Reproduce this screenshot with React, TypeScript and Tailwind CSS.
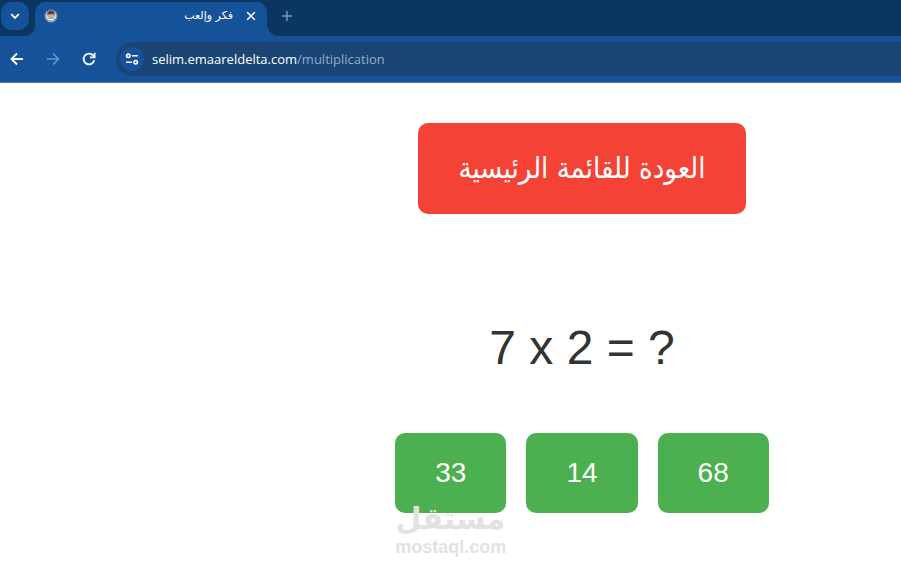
import { useState } from 'react';

function TabFavicon() {
  return (
    <svg viewBox="0 0 16 16" className="size-4 shrink-0" aria-hidden="true">
      <circle cx="8" cy="8" r="6.2" fill="none" stroke="#8e989c" strokeWidth="1.2" strokeDasharray="1.3 1" />
      <circle cx="8" cy="8" r="5.6" fill="#c3d3da" />
      <path d="M4.3 7.2C4 4.2 5.700 2.800 8 2.800s4 1.400 3.700 4.400z" fill="#4b4540" />
      <path d="M5 6.200h6v1.600c0 1.700-1.300 2.800-3 2.800s-3-1.100-3-2.800z" fill="#d9a684" />
      <path d="M3.800 12c.6-1.700 2-2.200 4.200-2.200s3.600.5 4.200 2.200C11 13.400 9.600 13.900 8 13.900S5 13.400 3.800 12z" fill="#7fb2da" />
      <path d="M5.300 11.600h5.400" stroke="#eef5f8" strokeWidth="1.200" />
    </svg>
  );
}

function TabStrip() {
  return (
    <div className="flex h-9 items-start bg-[#0b3661]">
      <div className="h-9 w-[35px] shrink-0 bg-[#15529a]">
        <div className="flex h-full rounded-br-[10px] bg-[#0b3661] pt-0.5 pl-px">
          <button type="button" aria-label="Search tabs" className="flex size-7 items-center justify-center rounded-[10px] bg-[#15529a]">
            <svg viewBox="0 0 10 10" className="size-2.5" fill="none" stroke="#fff" strokeWidth="1.800" aria-hidden="true">
              <path d="M1.200 3.200 5 7l3.800-3.800" />
            </svg>
          </button>
        </div>
      </div>
      <div className="flex h-9 w-[232px] shrink-0 bg-[#0b3661] pt-0.5">
        <div className="flex h-full w-full items-center rounded-t-[10px] bg-[#15529a] pr-2.5 pb-1.5 pl-2">
          <TabFavicon />
          <span dir="rtl" className="flex-1 pr-3 text-right font-['DejaVu_Sans',sans-serif] text-[11px] leading-4 text-white">
            فكر وإلعب
          </span>
          <button type="button" aria-label="Close tab" className="flex size-3 items-center justify-center">
            <svg viewBox="0 0 10 10" className="size-2.5" fill="none" stroke="#fff" strokeWidth="1.600" aria-hidden="true">
              <path d="m1.200 1.200 7.600 7.600M8.800 1.200 1.200 8.800" />
            </svg>
          </button>
        </div>
      </div>
      <div className="h-9 flex-1 bg-[#15529a]">
        <div className="flex h-full items-start rounded-bl-xl bg-[#0b3661] pt-2.5 pl-3.5">
          <button type="button" aria-label="New tab" className="flex size-3 items-center justify-center">
            <svg viewBox="0 0 12 12" className="size-3" fill="none" stroke="#7d98b5" strokeWidth="1.500" aria-hidden="true">
              <path d="M6 1v10M1 6h10" />
            </svg>
          </button>
        </div>
      </div>
    </div>
  );
}

function Toolbar() {
  return (
    <div className="flex h-[47px] items-center border-b border-[#4d7fb4] bg-[#15529a] pl-2.5">
      <button type="button" aria-label="Back" className="mr-[22px] size-3.5">
        <svg viewBox="0 0 14 14" className="size-3.5" fill="none" stroke="#fff" strokeWidth="1.800" aria-hidden="true">
          <path d="M13 7H1.800M7 1.500 1.500 7 7 12.500" />
        </svg>
      </button>
      <button type="button" aria-label="Forward" className="mr-[22px] size-3.5">
        <svg viewBox="0 0 14 14" className="size-3.5" fill="none" stroke="#6b94c6" strokeWidth="1.700" aria-hidden="true">
          <path d="M1 7h11.200M7 1.500 12.500 7 7 12.500" />
        </svg>
      </button>
      <button type="button" aria-label="Reload" className="mr-5 size-3.5">
        <svg viewBox="0 0 14 14" className="size-3.5" fill="none" stroke="#fff" strokeWidth="1.800" aria-hidden="true">
          <path d="M12.300 8.300A5.400 5.400 0 1 1 11.200 3.500l1.300 1.500" />
          <path d="M12.600.8v4.600H8" />
        </svg>
      </button>
      <div className="flex h-[34px] flex-1 items-center rounded-l-full bg-[#194474] pl-1">
        <button type="button" aria-label="View site information" className="mr-2 flex size-6 items-center justify-center rounded-full bg-[#15529a]">
          <svg viewBox="0 0 14 14" className="size-3.5" fill="none" stroke="#fff" strokeWidth="1.600" aria-hidden="true">
            <circle cx="3.300" cy="3.800" r="1.700" />
            <path d="M7 3.800h6M1 10.200h6" />
            <circle cx="10.700" cy="10.200" r="1.700" />
          </svg>
        </button>
        <span dir="ltr" className="font-['Open_Sans','Noto_Sans',sans-serif] text-[13px] leading-5 text-[#94accb]">
          <span className="text-white">selim.emaareldelta.com</span>/multiplication
        </span>
      </div>
    </div>
  );
}

function Watermark() {
  return (
    <div className="pointer-events-none absolute top-[68px] left-0 w-[110px] text-center font-bold text-[#e2e2e2]">
      <div dir="rtl" className="font-['DejaVu_Sans',sans-serif] text-[30px] leading-9">مستقل</div>
      <div className="font-['Liberation_Sans',Arial,sans-serif] text-[18px] leading-5">mostaql.com</div>
    </div>
  );
}

export default function App() {
  const [, setAnswer] = useState<number | null>(null);
  const answers = [33, 14, 68];

  return (
    <div className="min-h-screen overflow-hidden bg-white font-['Liberation_Sans',Arial,sans-serif]">
      <header>
        <TabStrip />
        <Toolbar />
      </header>
      <main className="flex flex-col items-center pt-10 pl-[263px]">
        <a
          href="#menu"
          dir="rtl"
          className="rounded-[10px] bg-[#f44336] px-10 py-5 font-['DejaVu_Sans_Condensed','DejaVu_Sans',sans-serif] text-[29px] leading-[51px] whitespace-nowrap text-white"
        >
          العودة للقائمة الرئيسية
        </a>
        <h1 className="mt-[106px] text-[48px] leading-[56px] text-[#333]">7 x 2 = ?</h1>
        <div className="relative mt-[57px] flex gap-5">
          {answers.map((value) => (
            <button
              key={value}
              type="button"
              onClick={() => setAnswer(value)}
              className="h-20 rounded-[10px] bg-[#4caf50] px-10 text-[28px] leading-10 text-white"
            >
              {value}
            </button>
          ))}
          <Watermark />
        </div>
      </main>
    </div>
  );
}
